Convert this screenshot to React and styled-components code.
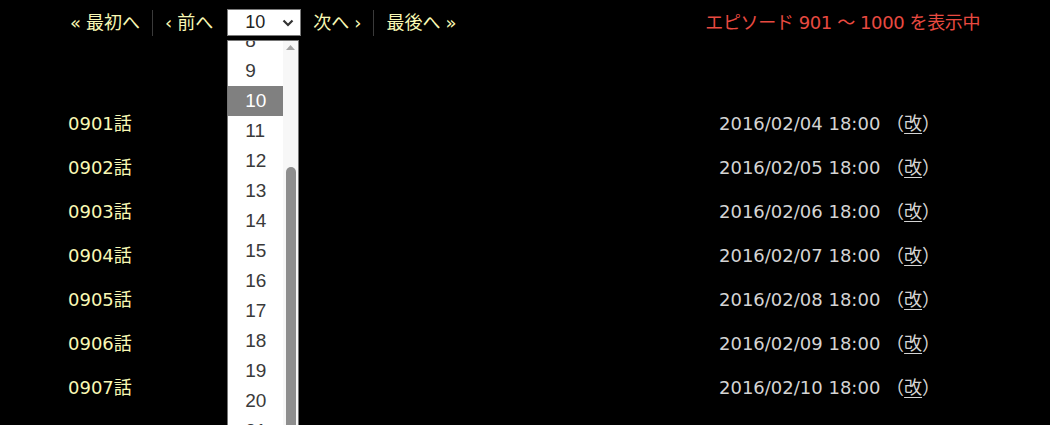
import React from "react";
import styled, { createGlobalStyle } from "styled-components";

const Global = createGlobalStyle`
  html, body { margin: 0; padding: 0; background: #000; overflow: hidden; }
  body { font-family: "DejaVu Sans", "Noto Sans CJK JP", sans-serif; }
`;

const Page = styled.div`
  width: 1050px;
  min-height: 425px;
  box-sizing: border-box;
  padding: 9px 70px 0 68px;
  font-size: 18px;
`;

const Toolbar = styled.div`
  display: flex;
  align-items: center;
  justify-content: space-between;
  height: 27px;
`;

const Nav = styled.nav`
  display: flex;
  align-items: center;
  gap: 12px;
`;

const NavLink = styled.a`
  display: flex;
  align-items: center;
  gap: 5px;
  color: #f8f8b4;
  text-decoration: none;
  white-space: nowrap;
  line-height: 27px;
  padding-left: ${(p) => (p.$first ? "2px" : "0")};
`;

const Arrow = styled.span`
  font-size: 18px;
`;

const Divider = styled.span`
  width: 1px;
  height: 26px;
  background: #3a3a3a;
`;

const SelectWrap = styled.div`
  position: relative;
  margin-left: 2px;
`;

const SelectBox = styled.div`
  box-sizing: border-box;
  width: 74px;
  height: 27px;
  background: #fff;
  border: 1px solid #7a7a7a;
  display: flex;
  align-items: center;
  padding: 0 6px 0 17px;
  font-family: "Liberation Sans", Arial, sans-serif;
  font-size: 18px;
  color: #222;
`;

const SelectValue = styled.span`
  flex: 1;
`;

const DropList = styled.div`
  position: absolute;
  top: calc(100% + 4px);
  left: 0;
  width: 72px;
  height: 400px;
  box-sizing: border-box;
  border: 1px solid #767676;
  border-bottom: none;
  background: #fff;
  display: flex;
  overflow: hidden;
  z-index: 5;
`;

const Options = styled.ul`
  list-style: none;
  margin: 0;
  padding: 0;
  flex: 1;
  overflow: hidden;
`;

const Option = styled.li`
  height: 30px;
  line-height: 30px;
  padding-left: 17px;
  font-family: "Liberation Sans", Arial, sans-serif;
  font-size: 19px;
  color: ${(p) => (p.$active ? "#fff" : "#3a3a3a")};
  background: ${(p) => (p.$active ? "#808080" : "transparent")};
`;

const ScrollTrack = styled.div`
  width: 15px;
  background: #f7f7f7;
  display: flex;
  flex-direction: column;
  align-items: center;
  padding-top: 4px;
  box-sizing: border-box;
`;

const ScrollThumb = styled.div`
  width: 10px;
  margin-top: 117px;
  flex: 1;
  background: #8e8e8e;
  border-radius: 5px 5px 0 0;
`;

const Status = styled.div`
  color: #e84a40;
  white-space: nowrap;
  line-height: 27px;
  letter-spacing: -0.4px;
`;

const List = styled.div`
  margin-top: 66px;
`;

const Row = styled.div`
  display: grid;
  grid-template-columns: 651px auto;
  height: 44px;
  line-height: 44px;
`;

const Title = styled.a`
  color: #f8f8b4;
  text-decoration: none;
`;

const DateCell = styled.span`
  color: #d4d4d4;
  white-space: nowrap;
`;

const EditLink = styled.a`
  color: #d4d4d4;
  text-decoration: underline;
  text-underline-offset: 3px;
`;

const Chevron = () => (
  <svg width="12" height="8" viewBox="0 0 12 8">
    <path d="M1.5 1.5 L6 6 L10.5 1.5" fill="none" stroke="#333" strokeWidth="2.2" />
  </svg>
);

const UpArrow = () => (
  <svg width="9" height="5" viewBox="0 0 9 5">
    <path d="M0 5 L4.5 0 L9 5 Z" fill="#a3a3a3" />
  </svg>
);

const pad = (n) => String(n).padStart(2, "0");

export default function App() {
  const rows = [];
  for (let i = 0; i < 7; i++) {
    const d = new Date(2016, 1, 4 + i);
    rows.push({
      title: `0${901 + i}話`,
      date: `${d.getFullYear()}/${pad(d.getMonth() + 1)}/${pad(d.getDate())} 18:00`,
    });
  }
  const pages = Array.from({ length: 30 }, (_, i) => i + 1);
  const current = 10;
  const firstShown = 8;
  return (
    <Page>
      <Global />
      <Toolbar>
        <Nav>
          <NavLink $first href="#"><Arrow>«</Arrow>最初へ</NavLink>
          <Divider />
          <NavLink href="#"><Arrow>‹</Arrow>前へ</NavLink>
          <SelectWrap>
            <SelectBox role="combobox" aria-expanded="true">
              <SelectValue>{current}</SelectValue>
              <Chevron />
            </SelectBox>
            <DropList role="listbox">
              <Options>
                {pages.map((p, i) => (
                  <Option
                    key={p}
                    $active={p === current}
                    style={i === 0 ? { marginTop: -((firstShown - 1) * 30 + 15) } : undefined}
                  >
                    {p}
                  </Option>
                ))}
              </Options>
              <ScrollTrack>
                <UpArrow />
                <ScrollThumb />
              </ScrollTrack>
            </DropList>
          </SelectWrap>
          <NavLink href="#">次へ<Arrow>›</Arrow></NavLink>
          <Divider />
          <NavLink href="#">最後へ<Arrow>»</Arrow></NavLink>
        </Nav>
        <Status>エピソード 901 ～ 1000 を表示中</Status>
      </Toolbar>
      <List>
        {rows.map((r) => (
          <Row key={r.title}>
            <Title href="#">{r.title}</Title>
            <DateCell>
              {r.date} （<EditLink href="#">改</EditLink>）
            </DateCell>
          </Row>
        ))}
      </List>
    </Page>
  );
}
